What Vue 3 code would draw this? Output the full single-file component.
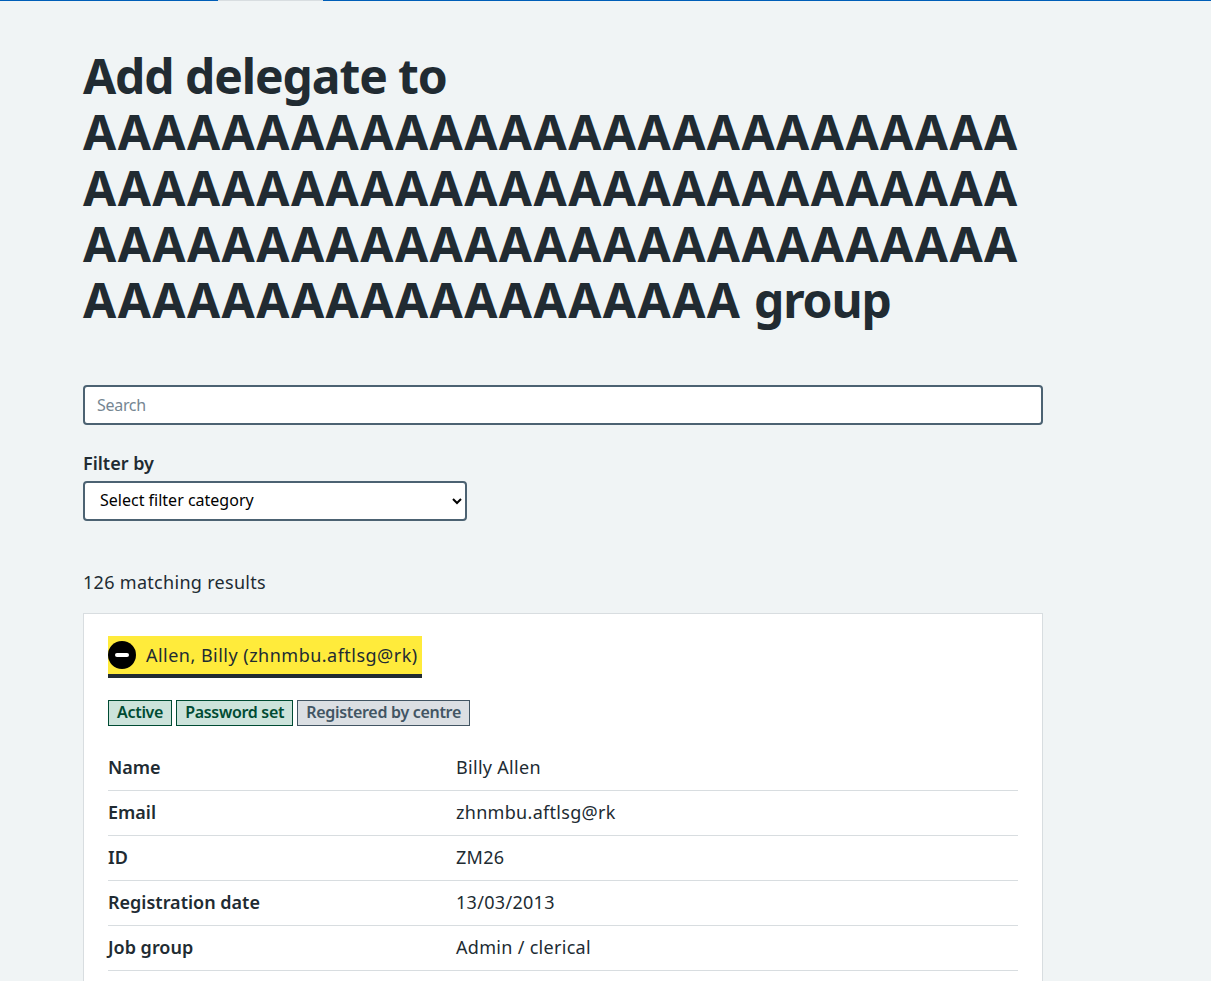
<script setup>
const rows = [
  ['Name', 'Billy Allen'],
  ['Email', 'zhnmbu.aftlsg@rk'],
  ['ID', 'ZM26'],
  ['Registration date', '13/03/2013'],
  ['Job group', 'Admin / clerical'],
  ['Status', 'Active']
]
const a = n => 'A'.repeat(n)
</script>

<template>
  <div class="page">
    <div class="topbar">
      <span class="seg-blue first"></span>
      <span class="seg-grey"></span>
      <span class="seg-blue"></span>
    </div>
    <main class="main">
      <h1 class="title">
        <span class="low">Add delegate to</span><br>
        <span class="caps">{{ a(27) }}</span><br>
        <span class="caps">{{ a(27) }}</span><br>
        <span class="caps">{{ a(27) }}</span><br>
        <span class="caps">{{ a(19) }}</span> <span class="low">group</span>
      </h1>
      <input class="search" type="text" placeholder="Search" />
      <label class="filter-label">Filter by</label>
      <select class="filter">
        <option>Select filter category</option>
      </select>
      <p class="count">126 matching results</p>
      <section class="card">
        <div class="summary">
          <span class="toggle">
            <svg width="28" height="28" viewBox="0 0 28 28"><circle cx="14" cy="14" r="14" fill="#000"/><rect x="7" y="12" width="14" height="4" rx="2" fill="#fff"/></svg>
            <span>Allen, Billy (zhnmbu.aftlsg@rk)</span>
          </span>
        </div>
        <div class="tags">
          <span class="tag green">Active</span>
          <span class="tag green">Password set</span>
          <span class="tag grey">Registered by centre</span>
        </div>
        <dl class="list">
          <div v-for="r in rows" :key="r[0]" class="row">
            <dt>{{ r[0] }}</dt>
            <dd>{{ r[1] }}</dd>
          </div>
        </dl>
      </section>
    </main>
  </div>
</template>

<style>
html, body { margin: 0; background: #f0f4f5; overflow: hidden; }
</style>

<style scoped>
.page {
  height: 981px;
  overflow: hidden;
  background: #f0f4f5;
  color: #212b32;
  font-family: "Noto Sans", "Open Sans", sans-serif;
  font-size: 19px;
  line-height: 28px;
}
.topbar { display: flex; height: 1px; }
.seg-blue { flex: 1; background: #005eb8; }
.seg-blue.first { flex: 0 0 218px; }
.seg-grey { flex: 0 0 105px; background: #d8dde0; }
.main { padding: 47px 0 0 83px; width: 960px; }
.title {
  margin: 0 0 57px;
  font-size: 48px;
  line-height: 56px;
  font-weight: 700;
}
.title .low { letter-spacing: -1.1px; }
.title .caps { letter-spacing: 1.44px; }
.search {
  display: block;
  box-sizing: border-box;
  width: 960px;
  height: 40px;
  padding: 0 12px;
  border: 2px solid #4c6272;
  border-radius: 4px;
  background: #fff;
  font: 16px "Noto Sans", sans-serif;
  letter-spacing: -0.3px;
  color: #212b32;
}
.search::placeholder { color: #768692; opacity: 1; }
.filter-label {
  display: block;
  margin-top: 24px;
  font-size: 18px;
  font-weight: 600;
  line-height: 28px;
}
.filter {
  display: block;
  box-sizing: border-box;
  width: 384px;
  height: 40px;
  margin-top: 4px;
  padding: 0 11px 2px;
  border: 2px solid #4c6272;
  border-radius: 4px;
  background: #fff;
  font: 16px "Noto Sans", sans-serif;
  color: #000;
}
.count { margin: 47px 0 17px; font-size: 18px; letter-spacing: 0.3px; }
.card {
  box-sizing: border-box;
  width: 960px;
  padding: 22px 24px 24px;
  background: #fff;
  border: 1px solid #d8dde0;
}
.summary { display: flex; }
.toggle {
  display: flex;
  align-items: center;
  gap: 10px;
  height: 38px;
  padding-right: 4px;
  background: #ffeb3b;
  border-bottom: 4px solid #212b32;
  font-size: 18px;
  letter-spacing: 0.48px;
}
.tags { display: flex; gap: 4px; margin-top: 22px; }
.tag {
  box-sizing: border-box;
  height: 26px;
  padding: 0 8px;
  border: 1px solid;
  font-size: 16px;
  letter-spacing: -0.3px;
  font-weight: 600;
  line-height: 23px;
}
.tag.green { background: #cce3db; border-color: #004b33; color: #004b33; }
.tag.grey { background: #dbdfe3; border-color: #425563; color: #425563; }
.list { margin: 20px 0 0; }
.row {
  display: grid;
  grid-template-columns: 348px 1fr;
  height: 45px;
  padding-bottom: 2px;
  align-items: center;
  box-sizing: border-box;
  border-bottom: 1px solid #d8dde0;
}
.row dt { font-weight: 600; font-size: 18px; }
.row dd { margin: 0; font-size: 18px; letter-spacing: 0.3px; }
</style>
